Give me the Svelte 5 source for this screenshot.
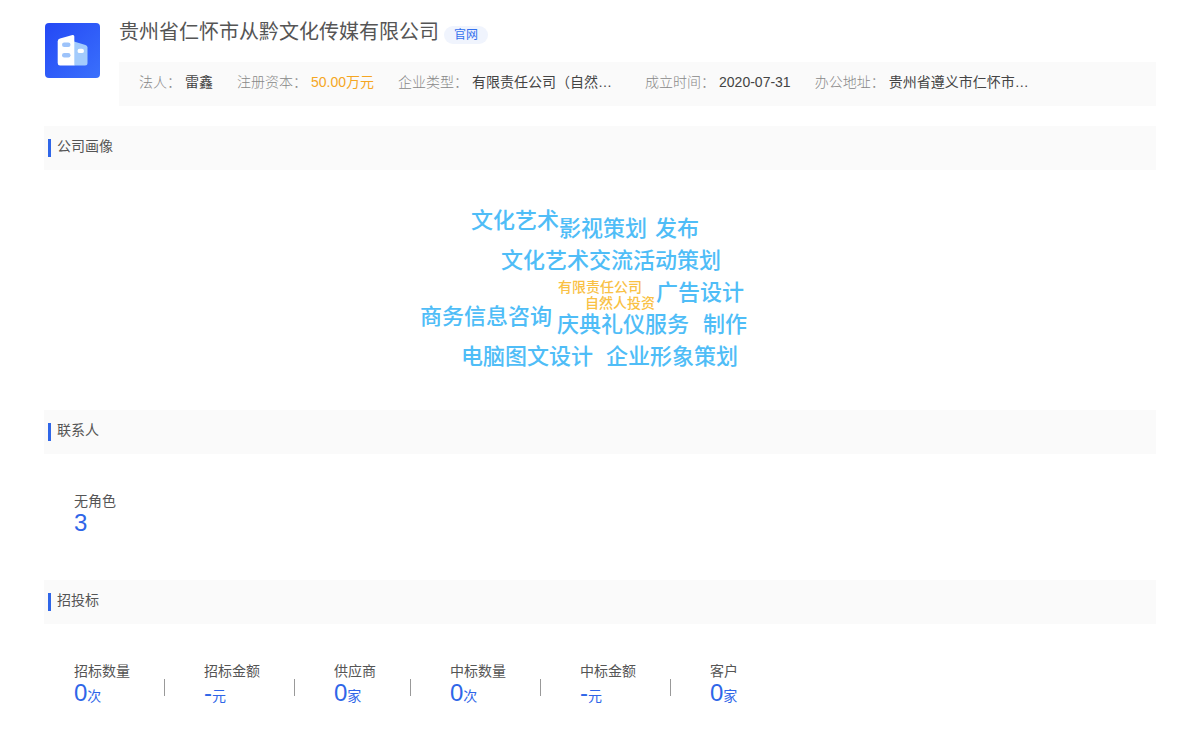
<script>
    const company = '贵州省仁怀市从黔文化传媒有限公司';

    const info = [
        { label: '法人：', value: '雷鑫' },
        { label: '注册资本：', value: '50.00万元', money: true },
        { label: '企业类型：', value: '有限责任公司（自然…', wide: true },
        { label: '成立时间：', value: '2020-07-31' },
        { label: '办公地址：', value: '贵州省遵义市仁怀市…', wide: true },
    ];

    // word positions inside the cloud
    const words = [
        { text: '文化艺术', x: 51, y: 4 },
        { text: '影视策划', x: 139, y: 12 },
        { text: '发布', x: 235, y: 12 },
        { text: '文化艺术交流活动策划', x: 81, y: 44 },
        { text: '有限责任公司', x: 138, y: 77, small: true },
        { text: '自然人投资', x: 165, y: 93, small: true },
        { text: '广告设计', x: 236, y: 76 },
        { text: '商务信息咨询', x: 0, y: 100 },
        { text: '庆典礼仪服务', x: 137, y: 108 },
        { text: '制作', x: 283, y: 108 },
        { text: '电脑图文设计', x: 41, y: 140 },
        { text: '企业形象策划', x: 186, y: 140 },
    ];

    const contacts = [{ label: '无角色', num: '3', unit: '' }];

    const bids = [
        { label: '招标数量', num: '0', unit: '次' },
        { label: '招标金额', num: '-', unit: '元' },
        { label: '供应商', num: '0', unit: '家' },
        { label: '中标数量', num: '0', unit: '次' },
        { label: '中标金额', num: '-', unit: '元' },
        { label: '客户', num: '0', unit: '家' },
    ];
</script>

{#snippet stats(items)}
    <ul class="stats">
        {#each items as item}
            <li>
                <div class="stat-label">{item.label}</div>
                <div class="stat-value"><span class="num">{item.num}</span>{item.unit}</div>
            </li>
        {/each}
    </ul>
{/snippet}

<main>
    <header>
        <svg class="logo" viewBox="0 0 55 55" aria-hidden="true">
            <defs>
                <linearGradient id="logo-bg" x1="0" y1="0" x2="1" y2="1">
                    <stop offset="0" stop-color="#2448f5" />
                    <stop offset="1" stop-color="#3a70fc" />
                </linearGradient>
            </defs>
            <rect width="55" height="55" rx="4" fill="url(#logo-bg)" />
            <path d="M29 18.500L40.500 22Q42.500 22.700 42.500 24.500V40Q42.500 42.500 40 42.500H29Z" fill="#a3cbfc" />
            <path d="M15 15.500L27.500 12Q29.300 11.600 29.300 13.500V42.500H15Q12.700 42.500 12.700 40V18.500Q12.700 16.200 15 15.500Z" fill="#fff" />
            <rect x="17" y="19.500" width="8.500" height="4.500" rx="2.200" fill="#9dc3fa" />
            <rect x="17" y="30" width="8.500" height="4.500" rx="2.200" fill="#9dc3fa" />
            <rect x="32.500" y="25.700" width="6.500" height="4.400" rx="2.200" fill="#fff" />
        </svg>
        <div class="company">
            <div class="title">
                <h1>{company}</h1>
                <a href="#site">官网</a>
            </div>
            <dl>
                {#each info as item}
                    <div class="info-item">
                        <dt>{item.label}</dt>
                        <dd class:money={item.money} class:wide={item.wide}>{item.value}</dd>
                    </div>
                {/each}
            </dl>
        </div>
    </header>

    <section>
        <h2>公司画像</h2>
        <div class="cloud-wrap">
            <div class="cloud">
                {#each words as word}
                    <span class:small={word.small} style="left: {word.x}px; top: {word.y}px">{word.text}</span>
                {/each}
            </div>
        </div>
    </section>

    <section>
        <h2>联系人</h2>
        {@render stats(contacts)}
    </section>

    <section>
        <h2>招投标</h2>
        {@render stats(bids)}
    </section>
</main>

<style>
    :global(body) {
        margin: 0;
        background: #fff;
    }
    main {
        padding: 20px 44px 0;
        font-family: "Liberation Sans", "Noto Sans CJK SC", sans-serif;
        font-size: 14px;
        line-height: 20px;
        color: #555;
    }
    h1, h2, dl, dd, ul {
        margin: 0;
        padding: 0;
        font-weight: 400;
    }
    header {
        display: flex;
        gap: 19px;
        margin-bottom: 20px;
    }
    .logo {
        flex: none;
        width: 55px;
        height: 55px;
        margin: 3px 0 0 1px;
    }
    .company {
        flex: 1;
        min-width: 0;
    }
    .title {
        display: flex;
        align-items: center;
        gap: 5px;
        height: 24px;
        margin-bottom: 18px;
    }
    h1 {
        font-size: 20px;
        line-height: 24px;
        color: #555;
    }
    .title a {
        margin-top: 6px;
        padding: 0 10px;
        border-radius: 9px;
        background: #f0f4fd;
        color: #3370ee;
        font-size: 12px;
        line-height: 18px;
        text-decoration: none;
    }
    dl {
        display: flex;
        gap: 24px;
        padding: 10px 20px 14px;
        background: #fafafa;
        white-space: nowrap;
    }
    .info-item {
        display: flex;
        gap: 4px;
    }
    dt {
        color: #888;
        font-weight: 300;
    }
    dd {
        color: #444;
    }
    .money {
        color: #f5a623;
    }
    .wide {
        width: 149px;
    }
    h2 {
        display: flex;
        align-items: center;
        gap: 6px;
        padding: 9px 4px 13px;
        background: #fafafa;
        font-size: 14px;
        line-height: 20px;
    }
    h2::before {
        content: "";
        width: 3px;
        height: 18px;
        margin-top: 4px;
        background: #2f66e8;
    }
    .cloud-wrap {
        padding: 31px 0 29px;
    }
    .cloud {
        position: relative;
        width: 360px;
        height: 180px;
        margin: 0 auto;
    }
    .cloud span {
        position: absolute;
        font-size: 22px;
        line-height: 32px;
        font-weight: 500;
        color: #4fbdf7;
        white-space: nowrap;
    }
    .cloud .small {
        font-size: 14px;
        line-height: 18px;
        color: #f9c145;
    }
    .stats {
        display: flex;
        padding: 37px 30px 44px;
        list-style: none;
    }
    .stats li {
        position: relative;
        padding-right: 74px;
    }
    .stats li:not(:last-child)::after {
        content: "";
        position: absolute;
        right: 39px;
        top: 18px;
        width: 1px;
        height: 17px;
        background: #999;
    }
    .stat-value {
        height: 25px;
        color: #2f66e8;
        line-height: 24px;
    }
    .num {
        font-size: 24px;
    }
</style>
